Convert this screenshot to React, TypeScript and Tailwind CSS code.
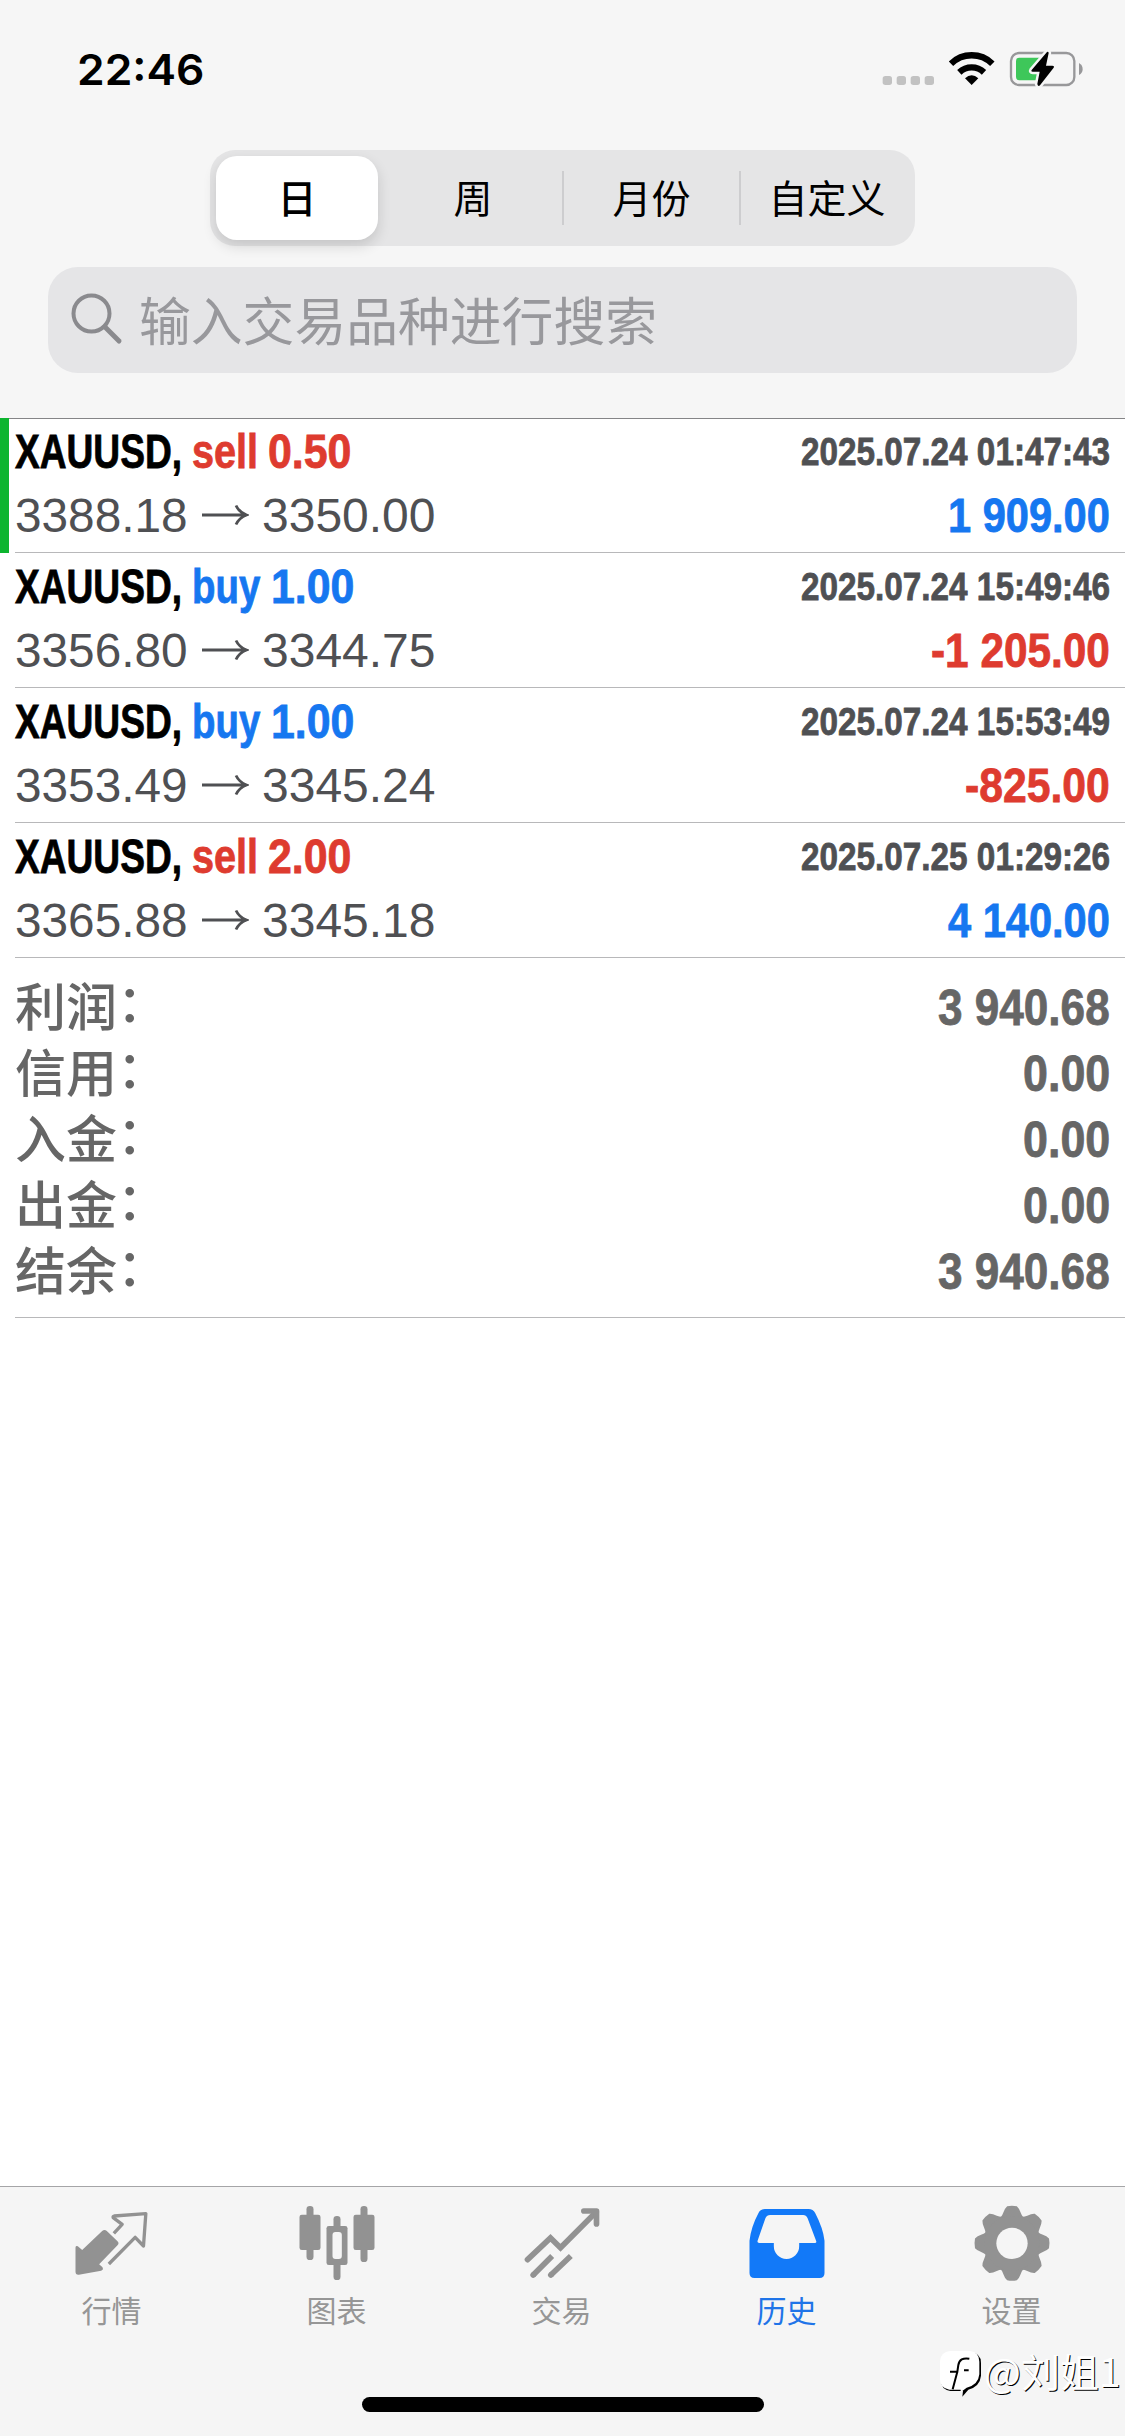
import { useLayoutEffect, useRef, useState } from "react";
import type { ReactNode } from "react";

type Side = "buy" | "sell";

type Deal = {
  side: Side;
  volume: string;
  open: string;
  close: string;
  time: string;
  profit: string;
  profitWidth: string;
  marked?: boolean;
};

const deals: Deal[] = [
  { side: "sell", volume: "0.50", open: "3388.18", close: "3350.00", time: "2025.07.24 01:47:43", profit: "1 909.00", profitWidth: "w-[162px]", marked: true },
  { side: "buy", volume: "1.00", open: "3356.80", close: "3344.75", time: "2025.07.24 15:49:46", profit: "-1 205.00", profitWidth: "w-[179px]" },
  { side: "buy", volume: "1.00", open: "3353.49", close: "3345.24", time: "2025.07.24 15:53:49", profit: "-825.00", profitWidth: "w-[145px]" },
  { side: "sell", volume: "2.00", open: "3365.88", close: "3345.18", time: "2025.07.25 01:29:26", profit: "4 140.00", profitWidth: "w-[162px]" },
];

const totals = [
  { label: "利润", value: "3 940.68", width: "w-[172px]" },
  { label: "信用", value: "0.00", width: "w-[87px]" },
  { label: "入金", value: "0.00", width: "w-[87px]" },
  { label: "出金", value: "0.00", width: "w-[87px]" },
  { label: "结余", value: "3 940.68", width: "w-[172px]" },
];

// Squeezes a line of text horizontally to the width of its box
function Condensed({ className, children }: { className: string; children: ReactNode }) {
  const box = useRef<HTMLSpanElement>(null);
  const text = useRef<HTMLSpanElement>(null);
  const [scale, setScale] = useState(1);

  useLayoutEffect(() => {
    if (box.current && text.current) {
      setScale(box.current.clientWidth / text.current.offsetWidth);
    }
  }, []);

  return (
    <span ref={box} className={`block shrink-0 whitespace-nowrap ${className}`}>
      <span ref={text} className="inline-block origin-left" style={{ transform: `scaleX(${scale})` }}>
        {children}
      </span>
    </span>
  );
}

function StatusBar() {
  return (
    <div className="flex h-[150px] items-start justify-between pl-[77px] pr-[41px]">
      <Condensed className="mt-[42px] h-[54px] w-[127px] font-['Inter'] text-[43px] leading-[54px] font-semibold text-black">
        22:46
      </Condensed>
      <svg className="mt-[30px] h-[80px] w-[205px]" viewBox="55 0 615 240">
        <g fill="#c2c2c2">
          <rect x="66" y="138" width="28" height="27" rx="8" />
          <rect x="108" y="138" width="28" height="27" rx="8" />
          <rect x="150" y="138" width="28" height="27" rx="8" />
          <rect x="192" y="138" width="28" height="27" rx="8" />
        </g>
        <g fill="none" stroke="#000" strokeWidth="19">
          <path d="M271 101a89 89 0 0 1 124 0" />
          <path d="M296 127a54 54 0 0 1 74 0" />
        </g>
        <path d="M333 165l-20-20q20-19 40 0z" />
        <rect x="451" y="69" width="190" height="96" rx="24" fill="none" stroke="#98989a" strokeWidth="7" />
        <path d="M655 99q11 6 11 18t-11 18z" fill="#98989a" />
        <path d="M476 83h62v68h-62q-10 0-10-10V93q0-10 10-10z" fill="#3ec75a" />
        <path
          d="M559 66l-46 54q-3 5 3 5h21l-7 37q2 9 8 4l41-53q3-6-4-6h-19l8-38q-1-6-5-3z"
          fill="#000"
          stroke="#f6f6f6"
          strokeWidth="15"
          paintOrder="stroke"
        />
      </svg>
    </div>
  );
}

function PeriodTabs() {
  return (
    <div className="mx-auto flex h-[96px] w-[705px] items-center rounded-[25px] bg-[#e5e5e6] p-[6px] text-[39px] leading-[60px] text-black">
      <div className="flex h-[84px] w-[162px] items-center justify-center rounded-[21px] bg-white font-medium shadow-[0_6px_14px_rgba(0,0,0,0.14)]">
        <span className="-mt-[4px]">日</span>
      </div>
      <div className="-mt-[4px] w-[184px] pl-[6px] text-center">周</div>
      <div className="h-[54px] w-[2px] bg-[#cdcdcf]" />
      <div className="-mt-[4px] w-[175px] text-center">月份</div>
      <div className="h-[54px] w-[2px] bg-[#cdcdcf]" />
      <div className="-mt-[4px] flex-1 pl-[4px] text-center">自定义</div>
    </div>
  );
}

function SearchField() {
  return (
    <div className="mx-[48px] mt-[21px] flex h-[106px] items-center rounded-[30px] bg-[#e5e5e7] pl-[23px]">
      <svg className="-mt-[2px] size-[52px]" viewBox="0 0 52 52" fill="none" stroke="#8a8a8e" strokeLinecap="round">
        <circle cx="20.5" cy="20.5" r="18" strokeWidth="4" />
        <path d="M34 34l14 14" strokeWidth="5" />
      </svg>
      <Condensed className="-mt-[2px] ml-[16px] w-[518px] text-[52px] leading-[76px] text-[#98989c]">
        输入交易品种进行搜索
      </Condensed>
    </div>
  );
}

function DealRow({ deal }: { deal: Deal }) {
  const sideColor = deal.side === "buy" ? "text-[#1677f0]" : "text-[#de3b2f]";
  const profitColor = deal.profit.startsWith("-") ? "text-[#de3b2f]" : "text-[#1677f0]";

  return (
    <div className="flex h-[135px] font-['Liberation_Sans']">
      <div className={`w-[9px] ${deal.marked ? "bg-[#0db52f]" : ""}`} />
      <div className="ml-[6px] flex-1 border-b border-[#b8b8ba] pr-[15px]">
        <div className="flex h-[64px] justify-between pt-[6px] text-[48px] leading-[56px] font-bold [-webkit-text-stroke:0.8px_currentColor]">
          <div className="flex">
            <Condensed className="w-[167px] text-black">XAUUSD,</Condensed>
            <Condensed className={`ml-[10px] ${deal.side === "buy" ? "w-[68px]" : "w-[66px]"} ${sideColor}`}>
              {deal.side}
            </Condensed>
            <Condensed className={`${deal.side === "buy" ? "ml-[11px]" : "ml-[10px]"} w-[83px] ${sideColor}`}>
              {deal.volume}
            </Condensed>
          </div>
          <Condensed className="w-[309px] text-[39px] text-[#4f5053]">{deal.time}</Condensed>
        </div>
        <div className="flex h-[60px] justify-between pt-[6px] text-[48px] leading-[56px]">
          <div className="flex text-[#4f5053]">
            <Condensed className="w-[173px]">{deal.open}</Condensed>
            <svg className="mx-[13px] mt-[16px] h-[22px] w-[48px]" viewBox="0 0 48 22" fill="none" stroke="#4f5053" strokeWidth="2.8">
              <path d="M1 11h44M35 1.500q3 6.500 10.500 9.500q-7.500 3-10.500 9.500" />
            </svg>
            <Condensed className="w-[174px]">{deal.close}</Condensed>
          </div>
          <Condensed className={`${deal.profitWidth} font-bold [-webkit-text-stroke:0.8px_currentColor] ${profitColor}`}>
            {deal.profit}
          </Condensed>
        </div>
      </div>
    </div>
  );
}

function Totals() {
  return (
    <div className="ml-[15px] h-[360px] border-b border-[#b8b8ba] pt-[13px] pr-[15px] font-bold text-[#666]">
      {totals.map((row) => (
        <div key={row.label} className="flex h-[66px] justify-between text-[51px] leading-[66px]">
          <div className="flex font-medium">
            <span>{row.label}</span>
            <span className="-mt-[4px]">：</span>
          </div>
          <Condensed className={`mt-[4px] font-['Liberation_Sans'] text-[50px] ${row.width} [-webkit-text-stroke:0.8px_currentColor]`}>
            {row.value}
          </Condensed>
        </div>
      ))}
    </div>
  );
}

function QuotesIcon() {
  return (
    <svg className="size-20" viewBox="97.5 66 240 240" fill="#929292">
      <path d="M105 203q0-8 7-4l13 11 60-57q7-6 14 0l32 31q6 6 0 12l-55 57 10 9q4 8-4 10l-67 12q-10 1-10-9z" />
      <path d="M220 160l25-27-27-20q-1-4 3-5l95-7-7 97-25-26-79 80" fill="none" stroke="#929292" strokeWidth="10" strokeLinejoin="round" />
    </svg>
  );
}

function ChartIcon() {
  return (
    <svg className="size-20" viewBox="772.5 66 240 240" fill="#929292">
      <rect x="798" y="78" width="21" height="162" rx="10" />
      <rect x="777" y="104" width="63" height="106" rx="7" />
      <rect x="960" y="78" width="21" height="168" rx="10" />
      <rect x="939" y="104" width="63" height="106" rx="7" />
      <rect x="879" y="108" width="21" height="192" rx="10" />
      <rect x="858" y="138" width="63" height="117" rx="7" />
      <rect x="876" y="156" width="28" height="81" rx="9" fill="#f5f5f5" />
    </svg>
  );
}

function TradeIcon() {
  return (
    <svg className="size-20" viewBox="127.5 66 240 240" fill="none" stroke="#929292" strokeWidth="17" strokeLinecap="round">
      <path d="M141 239l69-65 30 29 107-107" />
      <path d="M310 93h38v39" strokeLinejoin="round" />
      <path d="M158 285l57-57M211 285l60-57" strokeLinecap="butt" />
      <path d="M158 285l1-1M211 285l1-1" />
    </svg>
  );
}

function HistoryIcon() {
  return (
    <svg className="size-20" viewBox="802.5 66 240 240">
      <path
        d="M853 87h131q14 0 20 12 24 46 28 83v97q0 15-15 15H822q-15 0-15-15v-97q5-42 27-83 6-12 19-12z"
        fill="#1279f8"
      />
      <path
        d="M869 105h99q9 0 13 9l26 69q2 6-4 6h-47v10a38 38 0 0 1-76 0v-10h-44q-6 0-5-6l24-69q4-9 14-9z"
        fill="#f5f5f5"
      />
    </svg>
  );
}

const teeth = [0, 45, 90, 135, 180, 225, 270, 315];

function SettingsIcon() {
  return (
    <svg className="size-20" viewBox="217.5 66 240 240" fill="#929292">
      {teeth.map((angle) => (
        <path
          key={angle}
          transform={`rotate(${angle} 334.5 190)`}
          d="M295 115q8-3 13-16 5-14 12-20 14-3 29 0 7 6 12 20 5 13 13 16l-20 40h-40z"
        />
      ))}
      <circle cx="334.5" cy="190" r="82" />
      <circle cx="334.5" cy="190" r="47" fill="#f5f5f5" />
    </svg>
  );
}

const tabs = [
  { label: "行情", icon: <QuotesIcon /> },
  { label: "图表", icon: <ChartIcon /> },
  { label: "交易", icon: <TradeIcon /> },
  { label: "历史", icon: <HistoryIcon />, active: true },
  { label: "设置", icon: <SettingsIcon /> },
];

function Watermark() {
  return (
    <div className="absolute top-[2342px] left-[940px] flex items-center whitespace-nowrap">
      <svg className="h-[56px] w-[44px] overflow-visible" viewBox="120 495 132 168">
        <path d="M150 522h60q30 3 30 32v38q-3 32-38 42l-18 21 2-17h-38q-28-4-28-32v-54q2-27 30-30z" fill="#000" transform="translate(3 4)" />
        <path d="M150 522h60q28 3 28 32v38q-3 32-38 40l-18 14v-8h-34q-28-4-28-32v-54q2-27 30-30z" fill="#fff" />
        <path d="M208 545q-29-5-33 19l-3 20h-22M172 584l-14 53M192 580h14" fill="none" stroke="#000" strokeWidth="6" />
      </svg>
      <span className="text-[39px] leading-[56px] text-white [text-shadow:1px_1px_0_#000]">@刘姐1</span>
    </div>
  );
}

export default function App() {
  return (
    <div className="relative flex h-[2436px] w-[1125px] flex-col overflow-hidden bg-white font-['Noto_Sans_CJK_SC',sans-serif]">
      <header className="h-[419px] border-b border-[#858587] bg-[#f6f6f6]">
        <StatusBar />
        <PeriodTabs />
        <SearchField />
      </header>
      {/* the marker of the first deal covers the header line */}
      <main className="relative -mt-px flex-1">
        {deals.map((deal) => (
          <DealRow key={deal.time} deal={deal} />
        ))}
        <Totals />
      </main>
      <nav className="h-[250px] border-t border-[#a5a5a7] bg-[#f5f5f5]">
        <div className="grid h-[210px] grid-cols-5 pt-[15px]">
          {tabs.map((tab) => (
            <div key={tab.label} className="flex flex-col items-center">
              {tab.icon}
              <span className={`mt-[5px] pr-[2px] text-[30px] leading-[44px] ${tab.active ? "text-[#1f74e8]" : "text-[#969696]"}`}>
                {tab.label}
              </span>
            </div>
          ))}
        </div>
        <div className="mx-auto h-[15px] w-[402px] rounded-full bg-black" />
      </nav>
      <Watermark />
    </div>
  );
}
